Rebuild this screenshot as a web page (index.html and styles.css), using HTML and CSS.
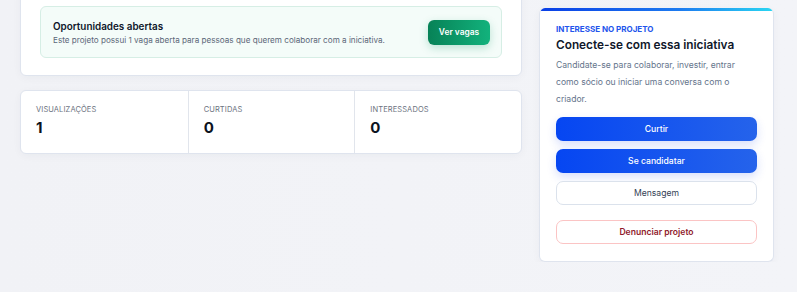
FILE: index.html
```html
<!DOCTYPE html>
<html lang="pt-BR">
<head>
    <meta charset="UTF-8">
    <meta name="viewport" content="width=device-width, initial-scale=1.0">
    <title>Projeto - Oportunidades</title>
    <link rel="stylesheet" href="styles.css">
</head>
<body>

<div class="page">
    <div class="main-col">
        <div class="card opportunity-card">
            <div class="opportunity">
                <div class="opportunity-text">
                    <h3>Oportunidades abertas</h3>
                    <p>Este projeto possui 1 vaga aberta para pessoas que querem colaborar com a iniciativa.</p>
                </div>
                <button class="btn-green">Ver vagas</button>
            </div>
        </div>

        <div class="card stats">
            <div class="stat">
                <span class="stat-label">Visualizações</span>
                <span class="stat-value">1</span>
            </div>
            <div class="stat">
                <span class="stat-label">Curtidas</span>
                <span class="stat-value">0</span>
            </div>
            <div class="stat">
                <span class="stat-label">Interessados</span>
                <span class="stat-value">0</span>
            </div>
        </div>
    </div>

    <aside class="card side-card">
        <span class="eyebrow">Interesse no projeto</span>
        <h2>Conecte-se com essa iniciativa</h2>
        <p class="side-text">Candidate-se para colaborar, investir, entrar como sócio ou iniciar uma conversa com o criador.</p>
        <div class="actions">
            <button class="btn btn-primary">Curtir</button>
            <button class="btn btn-primary">Se candidatar</button>
            <button class="btn btn-outline">Mensagem</button>
            <button class="btn btn-danger">Denunciar projeto</button>
        </div>
    </aside>
</div>

</body>
</html>
```

FILE: styles.css
```css
body {
    font-family: Inter, "Liberation Sans", Arial, sans-serif;
    background: linear-gradient(90deg, #f1f2f6 0%, #f3f4f8 100%);
    margin: 0;
    color: #0f172a;
}
.page {
    display: grid;
    grid-template-columns: 502px 235px;
    column-gap: 17px;
    align-items: start;
    padding-left: 20px;
}
.card {
    background-color: #fff;
    border: 1px solid #dfe4ee;
    border-radius: 6px;
    box-shadow: 0 2px 8px rgba(30, 41, 80, 0.04);
}
.main-col {
    display: flex;
    flex-direction: column;
    gap: 14px;
    margin-top: -15px;
}
.opportunity-card {
    padding: 20px 19px 17px 19px;
}
.opportunity {
    display: flex;
    align-items: center;
    justify-content: space-between;
    height: 50px;
    padding: 0 11px 0 12px;
    background-color: #f4fcf9;
    border: 1px solid #d6eee5;
    border-radius: 6px;
}
.opportunity h3 {
    margin: 0 0 3px 0;
    font-size: 9.9px;
    font-weight: 600;
    color: #0f172a;
}
.opportunity p {
    margin: 0;
    font-size: 8.15px;
    color: #5b6678;
}
.btn-green {
    height: 25px;
    width: 62px;
    padding: 0;
    font-family: inherit;
    font-size: 8.4px;
    font-weight: 600;
    color: #fff;
    background: linear-gradient(90deg, #078257 0%, #12b27c 100%);
    border: none;
    border-radius: 6px;
    box-shadow: 0 3px 8px rgba(16, 150, 100, 0.25);
    cursor: pointer;
}
.stats {
    display: grid;
    grid-template-columns: repeat(3, 1fr);
    height: 62px;
}
.stat {
    display: flex;
    flex-direction: column;
    padding: 14px 15px 0 15px;
    border-left: 1px solid #e1e5ec;
}
.stat:first-child {
    border-left: none;
}
.stat-label {
    font-size: 7.5px;
    text-transform: uppercase;
    color: #6b7280;
    letter-spacing: 0.1px;
}
.stat-value {
    margin-top: 4px;
    font-size: 15px;
    font-weight: 700;
    color: #0b1220;
}
.side-card {
    margin-top: 8px;
    padding: 16px 16px 17px 16px;
    border-top: none;
    position: relative;
    overflow: hidden;
}
.side-card::before {
    content: "";
    position: absolute;
    top: 0;
    left: 0;
    right: 0;
    height: 3px;
    background: linear-gradient(90deg, #0a3fe6 0%, #1d7bf0 60%, #2ad6f2 100%);
}
.eyebrow {
    display: block;
    font-size: 8px;
    font-weight: 700;
    text-transform: uppercase;
    color: #2254ec;
}
.side-card h2 {
    margin: 4px 0 0 0;
    font-size: 11.8px;
    font-weight: 600;
    color: #0f172a;
}
.side-text {
    margin: 5px 0 0 0;
    font-size: 8.6px;
    line-height: 17px;
    color: #64748b;
}
.actions {
    display: flex;
    flex-direction: column;
    gap: 8px;
    margin-top: 9px;
}
.btn {
    height: 24px;
    width: 100%;
    font-family: inherit;
    font-size: 8.6px;
    border-radius: 7px;
    cursor: pointer;
}
.btn-primary {
    color: #fff;
    font-weight: 500;
    background: linear-gradient(90deg, #0646f2 0%, #2563eb 100%);
    border: none;
    box-shadow: 0 4px 10px rgba(37, 80, 235, 0.18);
}
.btn-outline {
    color: #334155;
    background-color: #fff;
    border: 1px solid #dbe2ec;
}
.btn-danger {
    margin-top: 7px;
    color: #8f1a2c;
    font-weight: 600;
    background-color: #fff;
    border: 1px solid #fbc4c4;
}
```
